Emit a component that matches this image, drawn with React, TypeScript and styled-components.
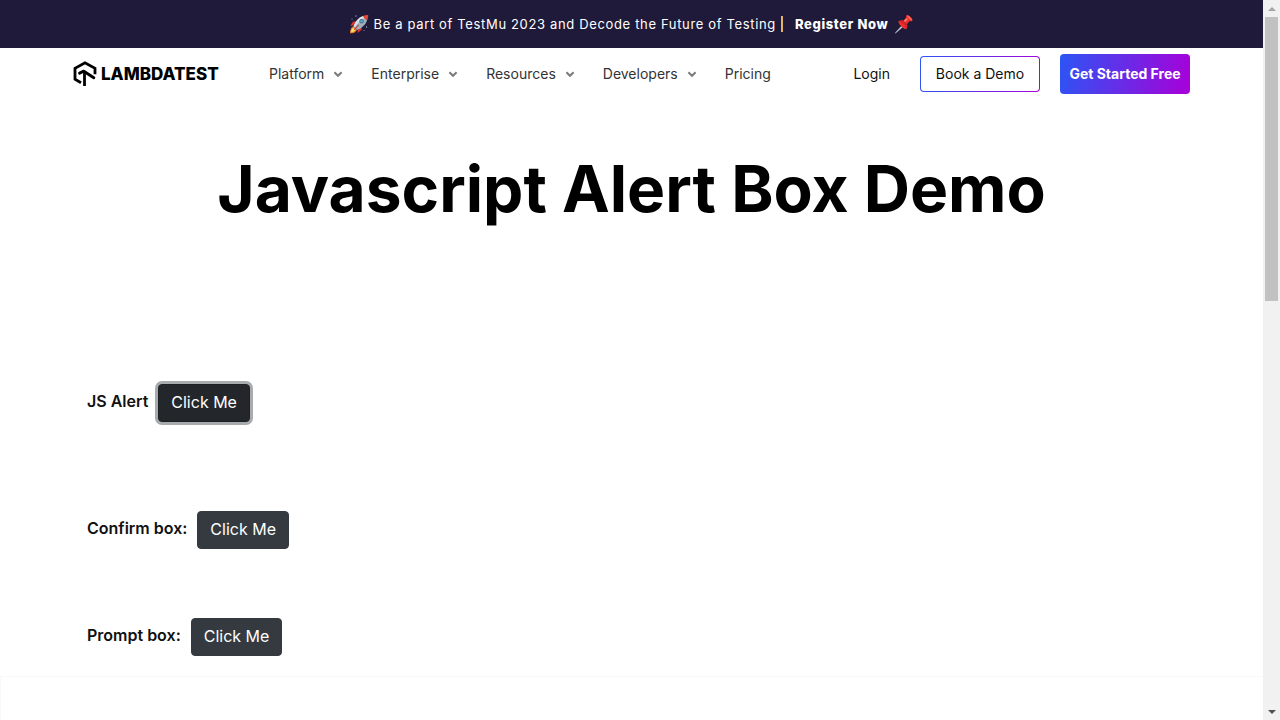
import React from "react";
import styled, { createGlobalStyle, css } from "styled-components";

const GlobalStyle = createGlobalStyle`
  *, *::before, *::after { box-sizing: border-box; }
  html { scrollbar-width: none; }
  body {
    margin: 0;
    background: #fff;
    color: #111;
    font-family: Inter, "Liberation Sans", sans-serif;
    font-size: 16px;
    line-height: 24px;
  }
  a { color: inherit; text-decoration: none; }
  button { font: inherit; cursor: pointer; }
`;

const Shell = styled.div`
  display: grid;
  grid-template-columns: minmax(0, 1fr) 17px;
  min-height: 100vh;
`;

const Page = styled.div`
  display: flex;
  flex-direction: column;
`;

const Banner = styled.div`
  display: flex;
  align-items: center;
  justify-content: center;
  height: 48px;
  padding-bottom: 1px;
  background: #1f1a3a;
  color: #fff;
  font-size: 13px;
  letter-spacing: 0.05em;
  white-space: nowrap;
`;

const BannerText = styled.span`
  margin-left: 5px;
`;

const Divider = styled.span`
  width: 2px;
  height: 16px;
  margin: 0 12px 0 5px;
  background: #e5b565;
`;

const RegisterLink = styled.a`
  margin-right: 6px;
  font-weight: 800;
`;

const Header = styled.header`
  display: flex;
  align-items: center;
  height: 52px;
  padding: 0 73px;
  white-space: nowrap;
`;

const Brand = styled.a`
  display: flex;
  align-items: center;
  gap: 4px;
  width: 196px;
  color: #000;
  font-size: 17px;
  font-weight: 800;
`;

const Nav = styled.nav`
  display: flex;
  align-items: center;
  gap: 28px;
  flex: 1;
  font-size: 14px;
  color: #333;
`;

const NavButton = styled.button`
  display: flex;
  align-items: center;
  gap: 9px;
  padding: 0;
  border: 0;
  background: none;
  color: inherit;
`;

const Actions = styled.div`
  display: flex;
  align-items: center;
  font-size: 14px;
`;

const LoginLink = styled.a`
  margin-right: 30px;
`;

const ActionLink = styled.a<{ $solid?: boolean }>`
  display: flex;
  align-items: center;
  justify-content: center;
  border-radius: 4px;
  ${(p) =>
    p.$solid
      ? css`
          width: 130px;
          height: 40px;
          background: linear-gradient(100deg, #2c55f4, #a800d8);
          color: #fff;
          font-weight: 700;
        `
      : css`
          width: 120px;
          height: 36px;
          margin-right: 20px;
          border: 1px solid transparent;
          background: linear-gradient(#fff, #fff) padding-box,
            linear-gradient(100deg, #2c55f4, #a800d8) border-box;
        `}
`;

const Title = styled.h1`
  margin: 49px 0 0;
  color: #000;
  font-size: 64px;
  font-weight: 700;
  line-height: 80px;
  text-align: center;
`;

const Demos = styled.main`
  flex: 1;
  padding: 155px 87px 19px;
`;

const DemoRow = styled.div<{ $space: number }>`
  display: flex;
  align-items: center;
  gap: 10px;
  margin-bottom: ${(p) => p.$space}px;
`;

const DemoLabel = styled.span`
  padding-bottom: 4px;
  font-weight: 600;
`;

const DarkButton = styled.button<{ $focused?: boolean }>`
  height: 38px;
  padding: 5px 12px 7px;
  border: 1px solid ${(p) => (p.$focused ? "#1d2124" : "#343a40")};
  border-radius: 4px;
  background: ${(p) => (p.$focused ? "#23272b" : "#343a40")};
  box-shadow: ${(p) => (p.$focused ? "0 0 0 3px #a8abae" : "none")};
  color: #fff;
  line-height: 24px;
`;

const NextSection = styled.section`
  height: 44px;
  border-top: 1px solid #f9f9f9;
  border-left: 1px solid #f9f9f9;
`;

const ScrollTrack = styled.div`
  display: flex;
  flex-direction: column;
  align-items: center;
  background: #f1f1f1;
`;

const ScrollArrow = styled.div<{ $active?: boolean }>`
  display: flex;
  align-items: center;
  justify-content: center;
  width: 17px;
  height: 17px;
  color: ${(p) => (p.$active ? "#505050" : "#a3a3a3")};
`;

const ScrollRun = styled.div`
  flex: 1;
`;

const ScrollThumb = styled.div`
  width: 13px;
  height: 284px;
  background: #c1c1c1;
`;

function Rocket() {
  return (
    <svg width="20" height="20" viewBox="0 0 20 20" aria-hidden="true">
      <g fill="#9aa5c0">
        <circle cx="7" cy="2" r=".7" />
        <circle cx="3" cy="5" r=".6" />
        <circle cx="17.5" cy="13" r=".7" />
        <circle cx="15" cy="16.5" r=".5" />
      </g>
      <path d="M8 7.2 4 7.6 1.2 12l4.3-.7zM13 12.1l-.5 3.8L8.6 19l.2-4.6z" fill="#d3342b" />
      <path d="M4.2 12.2C1.8 13.4 1 16.4 1 19.3c3 0 5.7-.9 6.8-3.4z" fill="#f4832a" />
      <path d="M4.2 13.7C2.8 14.8 2.2 16.5 2 18.2c1.9-.2 3.5-.9 4.4-2.3z" fill="#fbe169" />
      <path d="M4.6 12.4C6 8 9.6 3.4 14.2 2l4 3.7c-1.2 4.8-5.8 8.7-10.3 10.2z" fill="#9db0be" />
      <path d="M4.6 12.4C6 8 9.6 3.4 14.2 2l1.6 1.6C11.5 6.3 8 10 5.9 13.8z" fill="#d7e1e7" />
      <path d="M14 2c1.5-.8 3.5-1.1 5.2-1.1 0 1.7-.2 3.5-1 5.1-1.7-.5-3.5-2.2-4.2-4z" fill="#e54535" />
      <circle cx="12.6" cy="7.2" r="2.2" fill="#536878" />
      <circle cx="12.6" cy="7.2" r="1.3" fill="#4bb1db" />
      <path d="m4.8 15.4 4.5-5 .8.7-4.5 5z" fill="#c92f2c" />
    </svg>
  );
}

function Pushpin() {
  return (
    <svg width="20" height="20" viewBox="0 0 20 20" aria-hidden="true">
      <path d="m8.2 11 1.4 1.4L2 19l-1 .4.3-1z" fill="#bac5cd" />
      <path d="M4.2 7.5c1.5-1.2 3.4-1.4 5-.7l3-3.2c-.3-1-.1-1.9.7-2.7 2.5.5 4.9 2.9 5.6 5.5-.8.8-1.8 1-2.8.7l-2.8 3.1c.7 1.7.4 3.7-.9 5.1-3.2-.7-6.7-4.2-7.8-7.8z" fill="#ea2f2b" />
      <path d="M4.2 7.5c1.5-1.2 3.4-1.4 5-.7 1.9.6 3.2 1.7 3.7 3.4.7 1.7.4 3.7-.9 5.1-.1-3.4-3.3-7.2-7.8-7.8z" fill="#d2222a" />
      <path d="M12.9.9c2.5.5 4.9 2.9 5.6 5.5-1.7.7-6-3.1-5.6-5.5z" fill="#ff5a4e" />
      <path d="m10 7.1 2.8-2.9 1 .8-2.8 3z" fill="#ff8d82" />
    </svg>
  );
}

function LambdaMark() {
  return (
    <svg width="24" height="26" viewBox="0 0 24 26" aria-hidden="true">
      <path
        d="M8 21.8 2 18.3V7.3L12 1.8l10 5.5v6"
        fill="none"
        stroke="#000"
        strokeWidth="2.8"
      />
      <path
        d="M6.6 12.1 10.8 10.2 20.8 16.7"
        fill="none"
        stroke="#000"
        strokeWidth="3"
        strokeLinecap="round"
        strokeLinejoin="round"
      />
      <path d="M11.5 10.5V25" fill="none" stroke="#000" strokeWidth="2.8" />
    </svg>
  );
}

function Chevron() {
  return (
    <svg width="10" height="8" viewBox="0 0 10 8" aria-hidden="true">
      <path d="M1.4 2.2 5 5.8l3.6-3.6" fill="none" stroke="#7b7b7b" strokeWidth="2" />
    </svg>
  );
}

const menus = ["Platform", "Enterprise", "Resources", "Developers"];

const demos = [
  { id: "alert", label: "JS Alert", space: 89, focused: true },
  { id: "confirm", label: "Confirm box:", space: 69 },
  { id: "prompt", label: "Prompt box:", space: 0 },
];

export default function App() {
  return (
    <>
      <GlobalStyle />
      <Shell>
        <Page>
          <Banner>
            <Rocket />
            <BannerText>Be a part of TestMu 2023 and Decode the Future of Testing</BannerText>
            <Divider />
            <RegisterLink href="#register">Register Now</RegisterLink>
            <Pushpin />
          </Banner>
          <Header>
            <Brand href="#home">
              <LambdaMark />
              LAMBDATEST
            </Brand>
            <Nav>
              {menus.map((name) => (
                <NavButton key={name} type="button">
                  {name}
                  <Chevron />
                </NavButton>
              ))}
              <a href="#pricing">Pricing</a>
            </Nav>
            <Actions>
              <LoginLink href="#login">Login</LoginLink>
              <ActionLink href="#demo">Book a Demo</ActionLink>
              <ActionLink href="#start" $solid>
                Get Started Free
              </ActionLink>
            </Actions>
          </Header>
          <Title>Javascript Alert Box Demo</Title>
          <Demos>
            {demos.map((demo) => (
              <DemoRow key={demo.id} $space={demo.space}>
                <DemoLabel id={demo.id}>{demo.label}</DemoLabel>
                <DarkButton type="button" aria-describedby={demo.id} $focused={demo.focused}>
                  Click Me
                </DarkButton>
              </DemoRow>
            ))}
          </Demos>
          <NextSection />
        </Page>
        <ScrollTrack aria-hidden="true">
          <ScrollArrow>
            <svg width="8" height="4" viewBox="0 0 8 4">
              <path d="M0 4 4 0l4 4z" fill="currentColor" />
            </svg>
          </ScrollArrow>
          <ScrollThumb />
          <ScrollRun />
          <ScrollArrow $active>
            <svg width="8" height="4" viewBox="0 0 8 4">
              <path d="M0 0h8L4 4z" fill="currentColor" />
            </svg>
          </ScrollArrow>
        </ScrollTrack>
      </Shell>
    </>
  );
}
